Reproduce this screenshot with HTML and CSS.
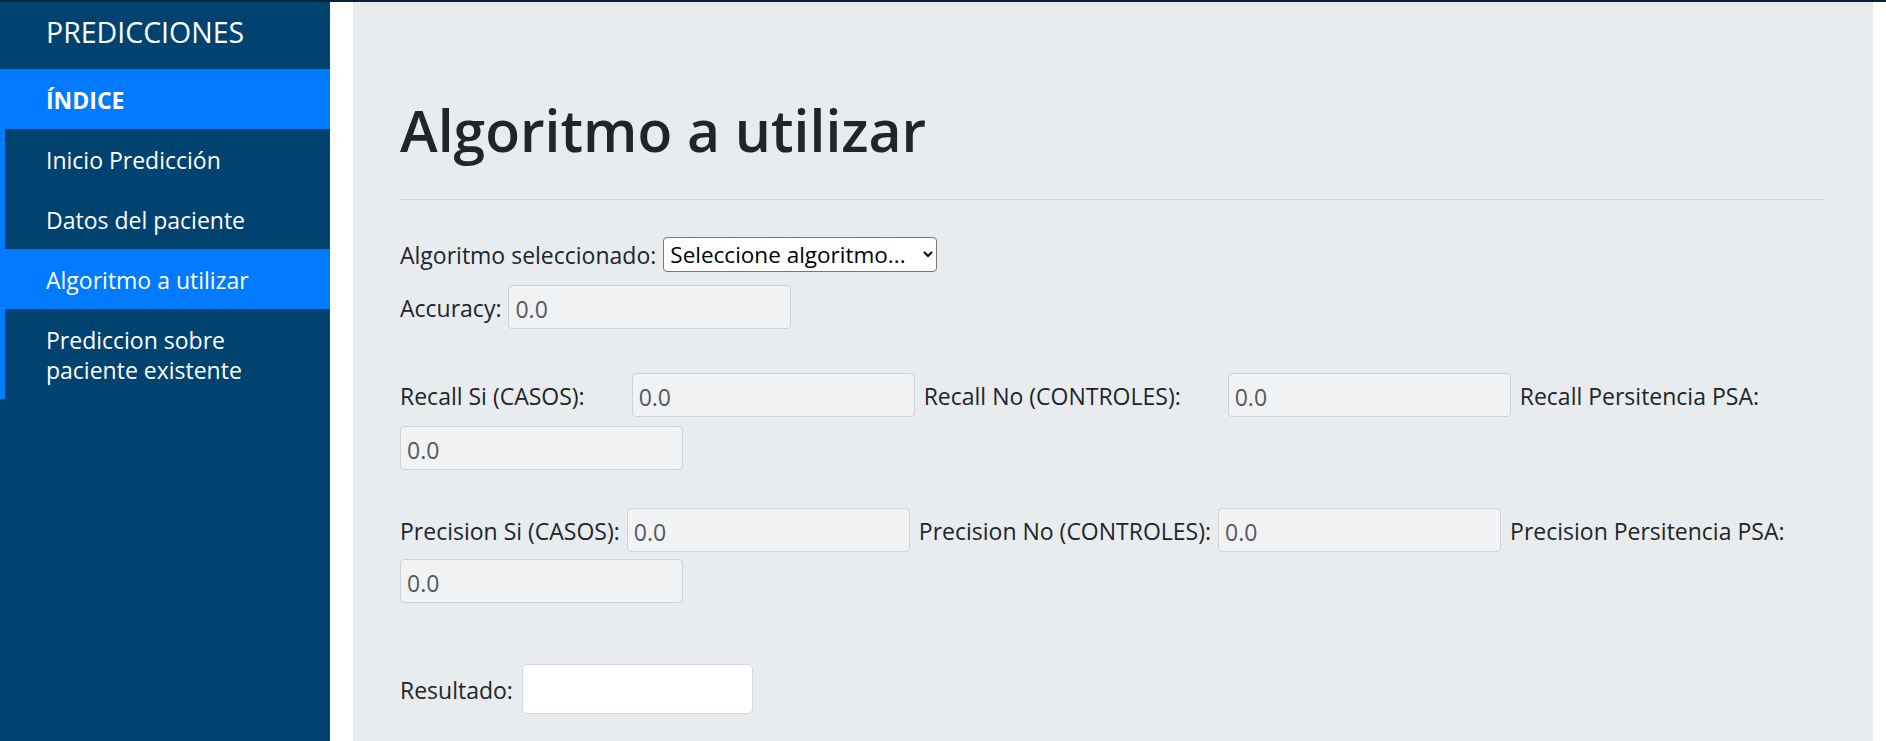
FILE: index.html
```html
<!DOCTYPE html>
<html lang="es">
<head>
<meta charset="utf-8">
<title>Algoritmo a utilizar</title>
<link rel="stylesheet" href="styles.css">
</head>
<body>
<div class="layout">
  <aside class="sidebar">
    <div class="sidebar__brand">PREDICCIONES</div>
    <div class="sidebar__section">ÍNDICE</div>
    <nav class="sidebar__nav">
      <a class="sidebar__link" href="#">Inicio Predicción</a>
      <a class="sidebar__link" href="#">Datos del paciente</a>
      <a class="sidebar__link sidebar__link--active" href="#">Algoritmo a utilizar</a>
      <a class="sidebar__link" href="#">Prediccion sobre paciente existente</a>
    </nav>
  </aside>
  <main class="content">
    <h1 class="content__title">Algoritmo a utilizar</h1>
    <hr class="content__rule">
    <form class="metrics">
      <div class="field-row">
        <label class="field-label" for="algo">Algoritmo seleccionado:</label>
        <select class="algo-select" id="algo">
          <option>Seleccione algoritmo...</option>
        </select>
      </div>
      <div class="field-row field-row--accuracy">
        <label class="field-label">Accuracy:</label>
        <input class="metric-input" type="text" value="0.0" readonly>
      </div>
      <div class="field-row field-row--recall">
        <label class="field-label field-label--spaced">Recall Si (CASOS):</label>
        <input class="metric-input" type="text" value="0.0" readonly>
        <label class="field-label field-label--spaced">Recall No (CONTROLES):</label>
        <input class="metric-input" type="text" value="0.0" readonly>
        <label class="field-label">Recall Persitencia PSA:</label>
        <input class="metric-input" type="text" value="0.0" readonly>
      </div>
      <div class="field-row field-row--precision">
        <label class="field-label">Precision Si (CASOS):</label>
        <input class="metric-input" type="text" value="0.0" readonly>
        <label class="field-label">Precision No (CONTROLES):</label>
        <input class="metric-input" type="text" value="0.0" readonly>
        <label class="field-label">Precision Persitencia PSA:</label>
        <input class="metric-input" type="text" value="0.0" readonly>
      </div>
      <div class="field-row field-row--result">
        <label class="field-label field-label--result">Resultado:</label>
        <input class="result-input" type="text">
      </div>
    </form>
  </main>
</div>
</body>
</html>
```
FILE: styles.css
```css
html, body {
  margin: 0;
  padding: 0;
}

body {
  border-top: 2px solid #0a2136;
  background: #ffffff;
  font-family: "Open Sans", "Noto Sans", sans-serif;
  color: #212529;
}

.layout {
  display: flex;
  min-height: calc(100vh - 2px);
}

/* Sidebar */
.sidebar {
  flex: 0 0 330px;
  width: 330px;
  background: #004370;
  color: #ffffff;
}

.sidebar__brand {
  font-size: 28.5px;
  line-height: 34px;
  padding: 13px 16px 20px 46px;
}

.sidebar__section {
  background: #007bff;
  font-size: 23px;
  font-weight: 700;
  line-height: 30px;
  padding: 16px 16px 14px 46px;
}

.sidebar__nav {
  display: flex;
  flex-direction: column;
  border-left: 5px solid #007bff;
}

.sidebar__link {
  display: block;
  color: #ffffff;
  text-decoration: none;
  font-size: 23px;
  line-height: 30px;
  padding: 16px 16px 14px 41px;
}

.sidebar__link--active {
  background: #007bff;
}

/* Content */
.content {
  flex: 1 1 auto;
  margin: 0 13px 0 23px;
  background: #e9ecef;
  padding: 93px 48px 0 47px;
}

.content__title {
  margin: 0;
  font-size: 57px;
  font-weight: 600;
  line-height: 71px;
  color: #212529;
}

.content__rule {
  margin: 33px 0 0;
  height: 0;
  border: 0;
  border-top: 1px solid rgba(0, 0, 0, 0.1);
}

.metrics {
  margin: 37px 0 0;
}

.field-row {
  display: flex;
  flex-wrap: wrap;
  align-items: center;
  row-gap: 9px;
  font-size: 23px;
  line-height: 1.36;
}

.field-row--accuracy {
  margin-top: 13px;
}

.field-row--recall {
  margin-top: 44px;
}

.field-row--precision {
  margin-top: 38px;
  row-gap: 7px;
}

.field-row--result {
  margin-top: 61px;
}

.field-label {
  margin-right: 7px;
  padding-top: 3px;
  white-space: nowrap;
}

.field-label--spaced {
  margin-right: 47px;
}

.field-label--result {
  margin-right: 9px;
}

.algo-select {
  width: 274px;
  height: 35px;
  box-sizing: border-box;
  font-family: inherit;
  font-size: 22.5px;
  color: #000000;
  background-color: #ffffff;
  border: 1px solid #767676;
  border-radius: 4px;
  padding: 0 2px;
}

.metric-input {
  width: 283px;
  height: 44px;
  box-sizing: border-box;
  margin: 0 9px 0 0;
  padding: 3px 6px 0;
  font-family: inherit;
  font-size: 23px;
  color: #55595e;
  background: #f1f2f4;
  border: 1px solid #ced1d5;
  border-radius: 4px;
  outline: none;
}

.result-input {
  width: 231px;
  height: 50px;
  box-sizing: border-box;
  margin: 0;
  padding: 0 6px;
  font-family: inherit;
  font-size: 23px;
  background: #ffffff;
  border: 1px solid #d4d7db;
  border-radius: 5px;
}
```
